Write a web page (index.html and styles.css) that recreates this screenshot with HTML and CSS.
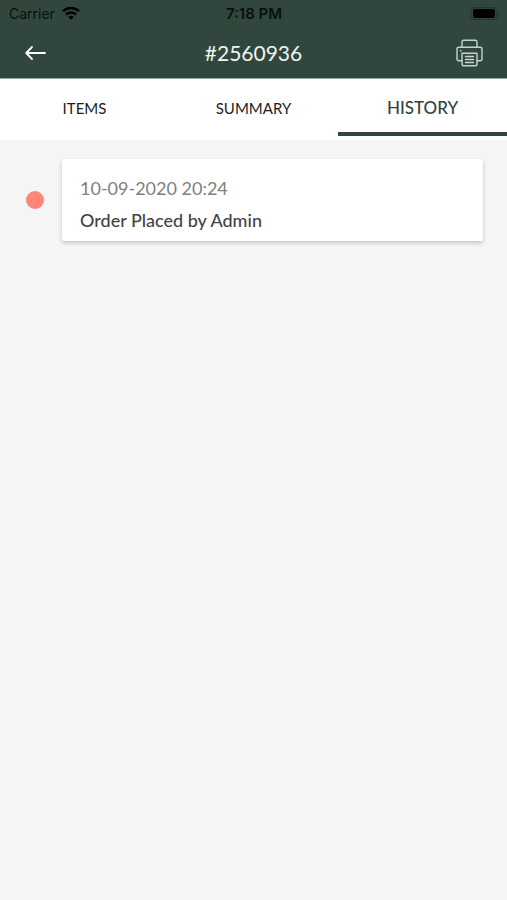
FILE: index.html
```html
<!DOCTYPE html>
<html lang="en">
<head>
<meta charset="utf-8">
<meta name="viewport" content="width=device-width, initial-scale=1">
<title>Order #2560936</title>
<link rel="stylesheet" href="styles.css">
</head>
<body>
<header class="top">
  <div class="status">
    <div class="carrier">
      <span>Carrier</span>
      <svg width="18" height="14" viewBox="0 0 18 14" aria-hidden="true">
        <g fill="none" stroke="currentColor" stroke-width="2.5">
          <path d="M1 4.2a11.5 11.5 0 0 1 16 0"/>
          <path d="M4 7.5a7.2 7.2 0 0 1 10 0"/>
        </g>
        <path fill="currentColor" d="M9 12.8 6.2 10a4 4 0 0 1 5.6 0z"/>
      </svg>
    </div>
    <time class="clock">7:18 PM</time>
    <div class="battery">
      <svg width="30" height="14" viewBox="0 0 30 14" aria-hidden="true">
        <rect x="2" y=".5" width="26" height="12" rx="4" fill="none" stroke="#22362e"/>
        <rect x="4" y="2" width="22" height="9" rx="2" fill="#000"/>
        <path d="M28.8 4.3v4.4q1.2-.7 1.2-2.2t-1.2-2.2z" fill="#22362e"/>
      </svg>
    </div>
  </div>
  <div class="bar">
    <button class="icon-button back" type="button" aria-label="Back">
      <svg width="22" height="16" viewBox="0 0 22 16" aria-hidden="true">
        <path d="M21 8H2.5M8 2 2.2 8 8 14" fill="none" stroke="currentColor" stroke-width="1.8" stroke-linecap="round" stroke-linejoin="round"/>
      </svg>
    </button>
    <h1 class="title">#2560936</h1>
    <button class="icon-button print" type="button" aria-label="Print">
      <svg width="28" height="28" viewBox="0 0 28 28" aria-hidden="true">
        <g fill="none" stroke="currentColor" stroke-width="1.4" stroke-linejoin="round" stroke-linecap="round">
          <path d="M7 8.3V3q0-1.7 1.7-1.7h11.6q1.7 0 1.7 1.7v5.3"/>
          <path d="M7 21.7H3.9q-1.9 0-1.9-1.9v-9.6q0-1.9 1.9-1.9h21.2q1.9 0 1.9 1.9v9.6q0 1.9-1.9 1.9H22"/>
          <path d="M7 14.3h15v10.6q0 1.8-1.8 1.8H8.8Q7 26.700 7 24.900z"/>
          <path d="M10.500 17.500h8M10.500 20.500h8M10.500 23.500h8"/>
        </g>
        <circle cx="5.700" cy="11.700" r=".9" fill="currentColor"/>
      </svg>
    </button>
  </div>
</header>
<nav class="tabs" aria-label="Order sections">
  <a class="tab" href="#items">ITEMS</a>
  <a class="tab" href="#summary">SUMMARY</a>
  <a class="tab active" href="#history" aria-current="page">HISTORY</a>
</nav>
<main class="history" id="history">
  <article class="event">
    <span class="dot"></span>
    <div class="card">
      <time class="date">10-09-2020 20:24</time>
      <p class="text">Order Placed by Admin</p>
    </div>
  </article>
</main>
</body>
</html>
```
FILE: styles.css
```css
* {
  box-sizing: border-box;
}

body {
  margin: 0;
  min-height: 100vh;
  background: #f5f5f5;
  font-family: Lato, sans-serif;
}

.top {
  background: #31473e;
  border-bottom: 1px solid #8fa79d;
}

.status {
  display: grid;
  grid-template-columns: 1fr auto 1fr;
  align-items: center;
  height: 27px;
  padding: 0 8px 0 9px;
  color: #07100c;
  font: 14px/20px Inter, sans-serif;
}

.carrier {
  display: flex;
  align-items: center;
  gap: 7px;
}

.carrier svg {
  color: #000;
}

.clock {
  font-size: 15px;
  font-weight: 600;
}

.battery {
  display: flex;
  justify-content: flex-end;
}

.bar {
  display: grid;
  grid-template-columns: 1fr auto 1fr;
  align-items: center;
  height: 51px;
  padding: 0 24px;
  color: #fff;
}

.icon-button {
  display: flex;
  padding: 0;
  border: 0;
  background: none;
  color: #fff;
}

.print {
  justify-self: end;
  color: #c3d4cc;
}

.title {
  margin: 0;
  color: #edf5f1;
  font-size: 21px;
  font-weight: 400;
  line-height: 28px;
}

.tabs {
  display: grid;
  grid-template-columns: repeat(3, 1fr);
  height: 61px;
  padding-bottom: 4px;
  background: #fff;
}

.tab {
  display: flex;
  align-items: center;
  justify-content: center;
  padding-top: 4px;
  border-bottom: 4px solid transparent;
  color: #1c1c1c;
  font-size: 15px;
  text-decoration: none;
}

.tab.active {
  border-color: #31473e;
  color: #31473e;
  font-size: 17px;
  font-weight: 500;
}

.history {
  padding: 19px 24px;
}

.event {
  display: flex;
  align-items: center;
  gap: 18px;
}

.dot {
  flex: none;
  width: 18px;
  height: 18px;
  margin-left: 2px;
  border-radius: 50%;
  background: #ff8679;
}

.card {
  flex: 1;
  padding: 13px 18px 5px;
  border-radius: 2px;
  background: #fff;
  box-shadow: 0 2px 4px rgba(0, 0, 0, 0.2);
}

.date,
.text {
  display: block;
  margin: 0;
  font-size: 18px;
  line-height: 32px;
}

.date {
  color: #808080;
}

.text {
  color: #444;
  font-weight: 500;
}
```
